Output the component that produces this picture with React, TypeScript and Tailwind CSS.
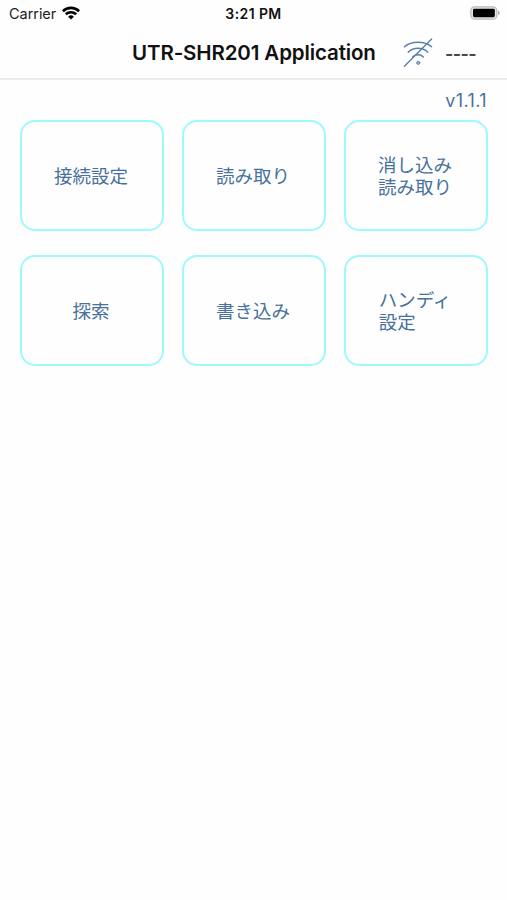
const cards: string[] = [
  '接続設定',
  '読み取り',
  '消し込み\n読み取り',
  '探索',
  '書き込み',
  'ハンディ\n設定',
];

function StatusBar() {
  return (
    <div className="grid h-[27px] grid-cols-3 items-center pl-[9px] pr-[7px] text-black">
      <div className="flex items-center gap-[6px]">
        <span className="pt-px text-[14.5px] leading-none tracking-[-0.05px] text-[#222]">Carrier</span>
        <svg className="h-[14px] w-[18px] -translate-y-px" viewBox="0 0 18 14" fill="none" stroke="#000" strokeWidth="2.6">
          <path d="M0.9 5.2 A11.6 11.6 0 0 1 17.1 5.2" />
          <path d="M3.8 8.3 A7.5 7.5 0 0 1 14.2 8.3" />
          <path d="M9 13.6 L6.1 10.7 A4.1 4.1 0 0 1 11.9 10.7 Z" fill="#000" stroke="none" />
        </svg>
      </div>
      <span className="pr-[2px] text-center text-[14px] font-semibold leading-none tracking-[0.4px] text-[#111]">3:21 PM</span>
      <svg className="h-[14px] w-[30px] -translate-y-px justify-self-end" viewBox="0 0 30 14">
        <rect x="0.8" y="0.8" width="26" height="12.4" rx="3.8" fill="#e4e4e4" stroke="#bcbcbc" strokeWidth="1.3" />
        <rect x="3" y="2.8" width="21.8" height="8.4" rx="1.4" fill="#000" />
        <path d="M28 4.8 Q29.8 5.6 29.8 7 Q29.8 8.4 28 9.2 Z" fill="#aaa" />
      </svg>
    </div>
  );
}

function DisconnectedIcon() {
  return (
    <svg className="h-[30px] w-[30px]" viewBox="0 0 30 30" fill="none" stroke="#5b80a8" strokeWidth="1.4" strokeLinecap="round">
      <path d="M1.4 8.8 C8.5 2.8 21.5 2.8 28.6 8.8" />
      <path d="M5.2 14.2 C10.5 8.9 19.5 8.9 24.8 14.2" />
      <path d="M9.6 19 C12.5 16 17.5 16 20.4 19" />
      <circle cx="15.2" cy="24.8" r="1.6" fill="#9fb3c9" strokeWidth="0.9" />
      <path d="M1.4 28.3 L28.6 1" />
    </svg>
  );
}

export default function App() {
  return (
    <div className="min-h-[900px] w-[507px] bg-[#fefefe] font-['Inter','Noto_Sans_CJK_JP',sans-serif]">
      <header className="h-[80px] border-b-2 border-[#ececec]">
        <StatusBar />
        <div className="flex h-[51px] items-center pl-[132px]">
          <h1 className="w-[271px] whitespace-nowrap pt-[2px] text-[20.5px] font-semibold leading-none tracking-[-0.12px] text-[#111]">
            UTR-SHR201 Application
          </h1>
          <DisconnectedIcon />
          <span className="ml-[12px] pt-[3px] text-[18px] font-semibold leading-none tracking-[-0.6px] text-[#444]">----</span>
        </div>
      </header>
      <main className="pl-5 pr-[19px]">
        <div className="flex h-[40px] items-center justify-end pr-px pt-[2px] text-[18px] leading-none tracking-[0.4px] text-[#48719c]">v1.1.1</div>
        <div className="grid grid-cols-3 gap-x-[18px] gap-y-[24px]">
          {cards.map((label) => (
            <button
              key={label}
              className="flex h-[111px] items-center justify-center rounded-[15px] border-2 border-[#9cfafc] pb-px pr-[2px] text-left font-['Noto_Sans_CJK_JP',sans-serif] text-[18.5px] leading-[22px] text-[#48719c]"
            >
              <span className="whitespace-pre-line">{label}</span>
            </button>
          ))}
        </div>
      </main>
    </div>
  );
}
